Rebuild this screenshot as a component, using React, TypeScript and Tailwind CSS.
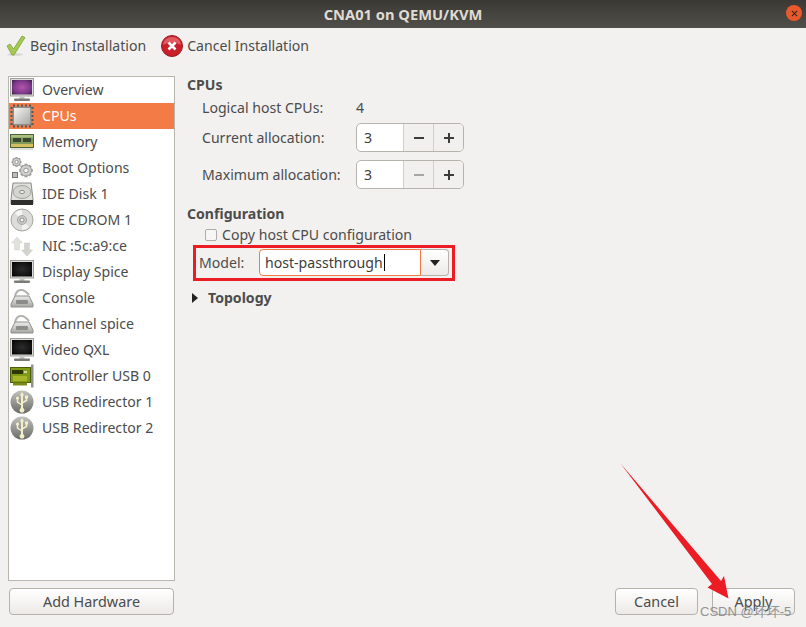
const font = "font-['Noto_Sans',sans-serif]";

function Monitor({ dark, id }: { dark?: boolean; id: string }) {
  return (
    <svg width="24" height="24" viewBox="0 0 24 24">
      <defs>
        <radialGradient id={id} cx="0.5" cy="0.5" r="0.7">
          <stop offset="0" stopColor={dark ? "#2c2c2c" : "#b454ac"} />
          <stop offset="0.6" stopColor={dark ? "#151515" : "#7f3a8c"} />
          <stop offset="1" stopColor={dark ? "#000" : "#43204f"} />
        </radialGradient>
      </defs>
      <rect x="0.5" y="0.5" width="23" height="17.5" fill="#dcdcd9" stroke="#9f9f9b" />
      <rect x="2" y="2" width="20" height="14.5" fill={`url(#${id})`} />
      <rect x="9.5" y="18.5" width="5" height="2.5" fill="#c4c4c0" />
      <rect x="4" y="20.5" width="16" height="2.5" rx="1" fill="#7b7b77" />
    </svg>
  );
}

function Chip() {
  const pins = [3, 7, 11, 15, 19];
  return (
    <svg width="24" height="24" viewBox="0 0 24 24">
      <defs>
        <linearGradient id="chipface" x1="0" y1="0" x2="1" y2="1">
          <stop offset="0" stopColor="#f4f4f2" />
          <stop offset="1" stopColor="#a9a9a6" />
        </linearGradient>
      </defs>
      {pins.map((p) => (
        <g key={p} fill="#5c5954">
          <rect x={p} y="0.5" width="2" height="3" />
          <rect x={p} y="20.5" width="2" height="3" />
          <rect x="0.5" y={p} width="3" height="2" />
          <rect x="20.5" y={p} width="3" height="2" />
        </g>
      ))}
      <rect x="2.5" y="2.5" width="19" height="19" rx="2" fill="#8f8e8a" />
      <rect x="4" y="4" width="16" height="16" fill="url(#chipface)" />
    </svg>
  );
}

function Ram() {
  return (
    <svg width="24" height="24" viewBox="0 0 24 24">
      <rect x="0.5" y="4.5" width="23" height="13" fill="#7d9a58" stroke="#4b6135" />
      <rect x="1" y="5" width="22" height="2.5" fill="#a9c080" />
      <rect x="3" y="8" width="8" height="4" fill="#3a4632" />
      <rect x="13" y="8" width="8" height="4" fill="#3a4632" />
      <rect x="1" y="14" width="22" height="3" fill="#d3c060" />
      <rect x="1" y="18" width="22" height="2" fill="#c9c9c5" opacity="0.6" />
    </svg>
  );
}

function Gear({ cx, cy, r }: { cx: number; cy: number; r: number }) {
  const teeth = [0, 45, 90, 135];
  return (
    <g>
      {teeth.map((a) => (
        <rect key={a} x={cx - r * 0.28} y={cy - r * 1.25} width={r * 0.56} height={r * 2.5} fill="#a8a8a5" transform={`rotate(${a} ${cx} ${cy})`} />
      ))}
      <circle cx={cx} cy={cy} r={r} fill="#cfcfcc" stroke="#9a9a97" />
      <circle cx={cx} cy={cy} r={r * 0.42} fill="#f8f8f6" stroke="#9a9a97" />
    </g>
  );
}

function Gears() {
  return (
    <svg width="24" height="24" viewBox="0 0 24 24">
      <Gear cx={6.5} cy={6} r={4} />
      <Gear cx={16} cy={14.5} r={5.5} />
      <rect x="2.5" y="16.5" width="5" height="5" fill="#bcbcb9" stroke="#77776f" />
    </svg>
  );
}

function Disk() {
  return (
    <svg width="24" height="24" viewBox="0 0 24 24">
      <path d="M3 1h18l2 16v5H1v-5z" fill="#e0e0dd" stroke="#8c8c88" />
      <ellipse cx="12" cy="10" rx="9" ry="6.5" fill="#d4d4d1" stroke="#a1a19d" />
      <ellipse cx="12" cy="10" rx="2.5" ry="1.6" fill="#eeeeec" stroke="#8c8c88" />
      <rect x="1" y="18" width="22" height="5" fill="#2e2e2c" />
    </svg>
  );
}

function Cd() {
  return (
    <svg width="24" height="24" viewBox="0 0 24 24">
      <circle cx="12" cy="12" r="11" fill="#dcdcda" stroke="#a5a5a1" />
      <path d="M12 12L5 5a10 10 0 0 1 7-3z" fill="#f5f5f4" />
      <path d="M12 12L19 19a10 10 0 0 1-7 3z" fill="#f2f2f1" />
      <circle cx="12" cy="12" r="4.5" fill="#c9c9c6" stroke="#a8a8a4" />
      <circle cx="12" cy="12" r="2" fill="#f8f8f7" stroke="#8f8f8b" />
    </svg>
  );
}

function Nic() {
  return (
    <svg width="24" height="24" viewBox="0 0 24 24">
      <path d="M7 3l5.5 6H9.5v7h-5V9h-3z" fill="#e2e2dd" stroke="#d2d2cc" strokeWidth="0.5" />
      <path d="M17 22l-5.5-6h3V9h5v7h3z" fill="#d4d4cf" stroke="#c4c4be" strokeWidth="0.5" />
    </svg>
  );
}

function Serial({ id }: { id: string }) {
  return (
    <svg width="24" height="24" viewBox="0 0 24 24">
      <defs>
        <linearGradient id={id} x1="0" y1="0" x2="0" y2="1">
          <stop offset="0" stopColor="#ececea" />
          <stop offset="1" stopColor="#a5a5a2" />
        </linearGradient>
      </defs>
      <path d="M5 11C6 3 13 1 19 9" fill="none" stroke="#b2b2af" strokeWidth="2" />
      <path d="M5 10h14l4 8v3H1v-3z" fill={`url(#${id})`} stroke="#90908a" />
      <rect x="6" y="14" width="12" height="4" rx="1" fill="#8c8c88" />
    </svg>
  );
}

function Card() {
  return (
    <svg width="24" height="24" viewBox="0 0 24 24">
      <rect x="0.5" y="3.5" width="20" height="15" fill="#7f9a16" stroke="#4b5c0c" />
      <rect x="2" y="6" width="11" height="4" fill="#2e3505" />
      <rect x="14" y="7" width="3" height="2" fill="#d7d7a0" />
      <rect x="3" y="12" width="14" height="5" fill="#a8b52a" />
      <rect x="21" y="0.5" width="2.5" height="23" fill="#8f8f8b" />
      <rect x="3" y="18.5" width="14" height="3" fill="#7d8a18" />
    </svg>
  );
}

function Usb({ id }: { id: string }) {
  return (
    <svg width="24" height="24" viewBox="0 0 24 24">
      <defs>
        <linearGradient id={id} x1="0" y1="0" x2="0" y2="1">
          <stop offset="0" stopColor="#c2c2be" />
          <stop offset="1" stopColor="#6a6a66" />
        </linearGradient>
      </defs>
      <circle cx="12" cy="12" r="11.5" fill={`url(#${id})`} />
      <path d="M12 2l2.2 3.5H13V18a2.4 2.4 0 1 1-2 0V5.5H9.8z" fill="#f3efc8" />
      <path d="M12 15l-4.5-3V9M12 13l4.5-2.5V8" fill="none" stroke="#f3efc8" strokeWidth="1.5" />
      <circle cx="7.5" cy="8" r="1.6" fill="#f3efc8" />
      <rect x="15" y="5.5" width="3" height="3" fill="#f3efc8" />
    </svg>
  );
}

const rows: [string, React.ReactNode][] = [
  ["Overview", <Monitor id="m1" />],
  ["CPUs", <Chip />],
  ["Memory", <Ram />],
  ["Boot Options", <Gears />],
  ["IDE Disk 1", <Disk />],
  ["IDE CDROM 1", <Cd />],
  ["NIC :5c:a9:ce", <Nic />],
  ["Display Spice", <Monitor id="m2" dark />],
  ["Console", <Serial id="s1" />],
  ["Channel spice", <Serial id="s2" />],
  ["Video QXL", <Monitor id="m3" dark />],
  ["Controller USB 0", <Card />],
  ["USB Redirector 1", <Usb id="u1" />],
  ["USB Redirector 2", <Usb id="u2" />],
];

function Spin({ minusOff }: { minusOff?: boolean }) {
  return (
    <div className="flex h-[29px] w-[108px] overflow-hidden rounded-[5px] border border-[#b6b2ac] bg-white">
      <div className="flex-1 pl-[7px] leading-[27px] text-[#3c3c3c]">3</div>
      <div className={`flex w-[30px] items-center justify-center border-l border-[#d2cfca] bg-[#f1f0ee] ${minusOff ? "text-[#a8a6a2]" : "text-[#3c3c3c]"}`}>
        <svg width="10" height="2" viewBox="0 0 10 2"><rect width="10" height="2" fill="currentColor" /></svg>
      </div>
      <div className="flex w-[30px] items-center justify-center border-l border-[#d2cfca] bg-[#f1f0ee] text-[#3c3c3c]">
        <svg width="10" height="10" viewBox="0 0 10 10"><path d="M0 4h4V0h2v4h4v2H6v4H4V6H0z" fill="currentColor" /></svg>
      </div>
    </div>
  );
}

function Btn({ label, className }: { label: string; className: string }) {
  return (
    <button className={`h-[27px] rounded-[4px] border border-[#b5b1ab] bg-gradient-to-b from-white to-[#eceae7] pt-[1px] text-[14.4px] leading-none text-[#4c4c4c] ${className}`}>
      {label}
    </button>
  );
}

export default function App() {
  return (
    <div className={`relative flex h-[627px] w-[806px] flex-col overflow-hidden bg-[#f2f1f0] text-[14.1px] text-[#4c4c4c] ${font}`}>
      {/* Title bar */}
      <div className="relative flex h-[28px] items-center justify-center bg-gradient-to-b from-[#3a3934] to-[#504f4a] text-[14.7px] font-bold text-[#dfdbd2]">
        CNA01 on QEMU/KVM
        <div className="absolute right-[4px] top-[5px] flex h-[16px] w-[16px] items-center justify-center rounded-full bg-[#e9592c] text-[#3c2a20]">
          <svg width="7" height="7" viewBox="0 0 8 8"><path d="M1 1l6 6M7 1L1 7" stroke="currentColor" strokeWidth="1.4" /></svg>
        </div>
      </div>

      {/* Toolbar */}
      <div className="flex h-[36px] items-center pl-[6px]">
        <div className="flex items-center gap-[4px]">
          <svg width="20" height="22" viewBox="0 0 20 22">
            <ellipse cx="9" cy="19.5" rx="8" ry="1.5" fill="#d8d8d4" />
            <path d="M1 11l3-2 3.5 5L16 1l3 1.5L8 20H6z" fill="#a5c955" stroke="#7aa332" strokeWidth="0.8" />
          </svg>
          <span>Begin Installation</span>
        </div>
        <div className="ml-[15px] flex items-center gap-[4px]">
          <svg width="22" height="22" viewBox="0 0 22 22">
            <circle cx="11" cy="11" r="10.5" fill="#c9202b" stroke="#9a1a20" />
            <path d="M2 10a9 8 0 0 1 18 0c-5-3-13-3-18 0z" fill="#e25a5f" />
            <path d="M7.5 7.5l7 7M14.5 7.5l-7 7" stroke="#fff" strokeWidth="2.6" />
          </svg>
          <span>Cancel Installation</span>
        </div>
      </div>

      {/* Body */}
      <div className="flex flex-1 pl-[8px] pt-[12px]">
        <div className="flex w-[167px] flex-col">
          <div className="h-[505px] border border-[#b9b5af] bg-white">
            {rows.map(([label, icon], i) => (
              <div key={label} className={`flex h-[26px] items-center pl-[1px] ${i === 1 ? "bg-[#f37b46] text-white" : ""}`}>
                <div className="flex h-[24px] w-[24px] items-center justify-center">{icon}</div>
                <span className="ml-[8px]">{label}</span>
              </div>
            ))}
          </div>
          <Btn label="Add Hardware" className="ml-[1px] mt-[7px] w-[165px]" />
        </div>

        <div className="flex flex-1 flex-col pl-[12px]">
          <div className="mt-[-1px] font-bold leading-[20px]">CPUs</div>
          <div className="ml-[15px] mt-[3px] flex h-[20px] items-center">
            <span className="w-[154px]">Logical host CPUs:</span>
            <span>4</span>
          </div>
          <div className="ml-[15px] mt-[5px] flex items-center">
            <span className="w-[154px]">Current allocation:</span>
            <Spin />
          </div>
          <div className="ml-[15px] mt-[8px] flex items-center">
            <span className="w-[154px]">Maximum allocation:</span>
            <Spin minusOff />
          </div>

          <div className="mt-[15px] font-bold leading-[20px]">Configuration</div>
          <div className="ml-[18px] mt-[1px] flex h-[20px] items-center gap-[5px]">
            <div className="h-[12px] w-[12px] rounded-[2px] border border-[#b0aca6] bg-[#f7f6f5]" />
            <span>Copy host CPU configuration</span>
          </div>
          <div className="ml-[12px] mt-[4px] flex h-[27px] items-center">
            <span className="w-[60px]">Model:</span>
            <div className="flex h-[27px] w-[190px]">
              <div className="flex flex-1 items-center rounded-l-[4px] border border-[#f37b46] bg-white pl-[5px] text-[#3c3c3c]">
                host-passthrough
                <span className="ml-[1px] h-[17px] w-px bg-black" />
              </div>
              <div className="flex w-[28px] items-center justify-center rounded-r-[4px] border border-l-0 border-[#b6b2ac] bg-gradient-to-b from-white to-[#eceae7]">
                <svg width="10" height="6" viewBox="0 0 10 6"><path d="M0 0h10L5 6z" fill="#222" /></svg>
              </div>
            </div>
          </div>
          <div className="mt-[12px] flex h-[20px] items-center pl-[5px] font-bold">
            <svg width="6" height="10" viewBox="0 0 6 10"><path d="M0 0l6 5-6 5z" fill="#222" /></svg>
            <span className="ml-[10px]">Topology</span>
          </div>

          <div className="mb-[12px] mr-[11px] mt-auto flex justify-end gap-[14px]">
            <Btn label="Cancel" className="w-[83px]" />
            <Btn label="Apply" className="w-[83px]" />
          </div>
        </div>
      </div>

      {/* Annotations drawn over the screenshot */}
      <div className="absolute left-[193px] top-[245px] h-[36px] w-[262px] border-[3px] border-[#ec1c24]" />
      <svg className="absolute left-0 top-0" width="806" height="627" viewBox="0 0 806 627">
        <path d="M620.5 463.5L721 581L724 576L728.5 598.5L707.5 587.5L712 584z" fill="#ec1c24" />
      </svg>
      <div className="absolute left-[700px] top-[605px] font-['Liberation_Sans','Noto_Sans_CJK_SC',sans-serif] text-[13px] leading-none text-[#8a8a8a] opacity-90">
        CSDN @坏坏-5
      </div>
    </div>
  );
}
